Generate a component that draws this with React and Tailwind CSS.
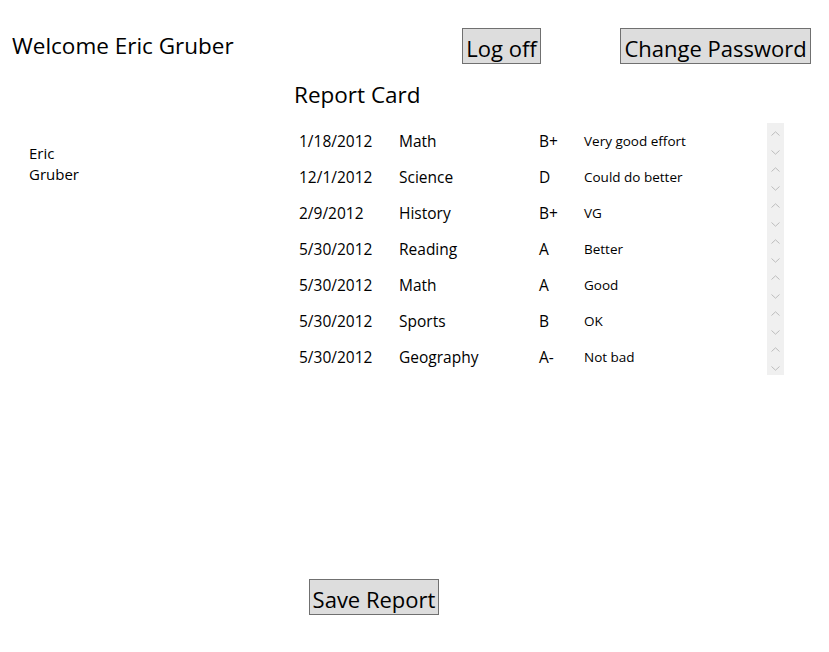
const grades = [
  { date: "1/18/2012", subject: "Math", grade: "B+", comment: "Very good effort" },
  { date: "12/1/2012", subject: "Science", grade: "D", comment: "Could do better" },
  { date: "2/9/2012", subject: "History", grade: "B+", comment: "VG" },
  { date: "5/30/2012", subject: "Reading", grade: "A", comment: "Better" },
  { date: "5/30/2012", subject: "Math", grade: "A", comment: "Good" },
  { date: "5/30/2012", subject: "Sports", grade: "B", comment: "OK" },
  { date: "5/30/2012", subject: "Geography", grade: "A-", comment: "Not bad" },
];

function Chevron({ up }) {
  return (
    <svg width="9" height="5" viewBox="0 0 9 5" className="block">
      <path
        d={up ? "M0.5 4.5 L4.5 0.8 L8.5 4.5" : "M0.5 0.5 L4.5 4.2 L8.5 0.5"}
        fill="none"
        stroke="#bdbdbd"
        strokeWidth="1"
      />
    </svg>
  );
}

function Button({ children, className }) {
  return (
    <button
      className={`h-[36px] border border-[#707070] bg-[#dddddd] text-[22px] leading-none text-black whitespace-nowrap flex items-center justify-center pt-[3px] ${className}`}
    >
      {children}
    </button>
  );
}

export default function App() {
  return (
    <div className="w-[829px] h-[652px] bg-white text-black font-['Open_Sans',sans-serif] overflow-hidden">
      <div className="flex items-center h-[36px] mt-[28px]">
        <span className="ml-[12px] w-[450px] text-[22.5px] leading-none">Welcome Eric Gruber</span>
        <Button className="w-[79px]">Log off</Button>
        <Button className="ml-[79px] w-[191px]">Change Password</Button>
      </div>

      <div className="ml-[294px] mt-[15px] text-[22.5px] leading-[32px]">Report Card</div>

      <div className="flex mt-[12px]">
        <div className="w-[299px] pl-[29px] pt-[20px]">
          <div className="w-[50px] text-[15px] leading-[21px]">Eric Gruber</div>
        </div>
        <div className="w-[485px]">
          {grades.map((g, i) => (
            <div key={i} className="flex h-[36px]">
              <div className="w-[100px] flex items-center pt-[2px] text-[15.5px]">{g.date}</div>
              <div className="w-[140px] flex items-center pt-[2px] text-[15.5px]">{g.subject}</div>
              <div className="w-[45px] flex items-center pt-[2px] text-[15.5px]">{g.grade}</div>
              <div className="w-[183px] flex items-center pt-[1px] text-[13.5px]">{g.comment}</div>
              <div className="w-[17px] bg-[#f0f0f0] flex flex-col items-center pt-[8px] gap-[14px]">
                <Chevron up />
                <Chevron />
              </div>
            </div>
          ))}
        </div>
      </div>

      <Button className="ml-[309px] mt-[204px] w-[130px]">Save Report</Button>
    </div>
  );
}
